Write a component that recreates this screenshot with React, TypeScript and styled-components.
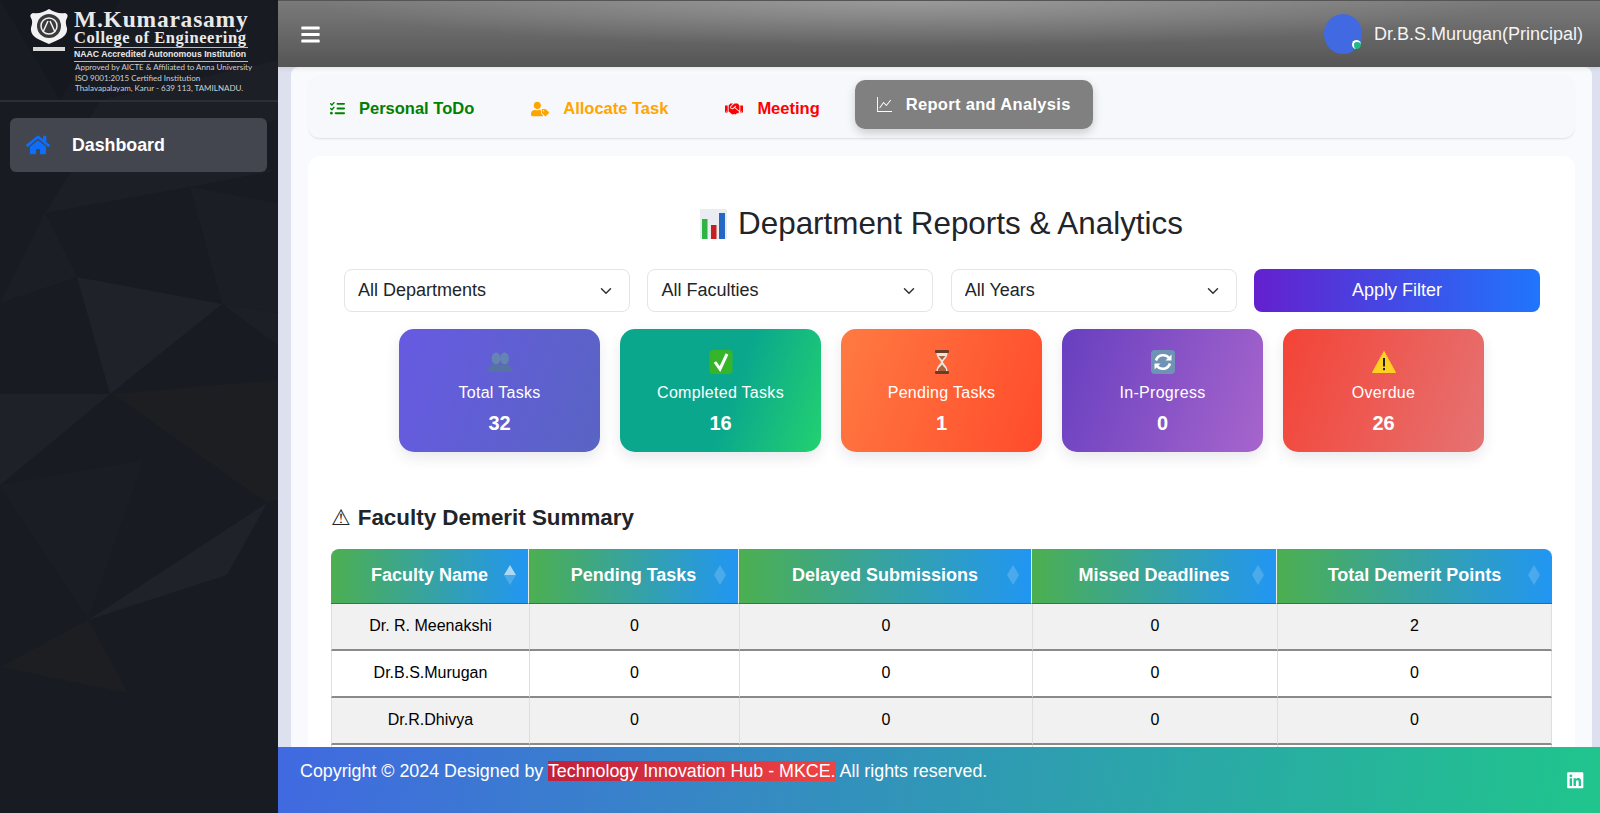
import * as React from "react";
import styled, { createGlobalStyle } from "styled-components";
import { FaBars, FaHome, FaUserTag, FaHandshake, FaLinkedin } from "react-icons/fa";
import { FaListCheck } from "react-icons/fa6";
import { BsGraphUp } from "react-icons/bs";
import { ChevronDown } from "lucide-react";

const GlobalStyle = createGlobalStyle`
  html, body {
    margin: 0;
    padding: 0;
    height: 100%;
    overflow: hidden;
    font-family: "Liberation Sans", Arial, sans-serif;
  }
  * {
    box-sizing: border-box;
  }
`;

const Shell = styled.div`
  display: flex;
  width: 100%;
  height: 813px;
  overflow: hidden;
`;

/* ---- sidebar ---- */

const Sidebar = styled.aside`
  position: relative;
  flex: none;
  width: 278px;
  background: #181b22;
  overflow: hidden;
`;

const Facets = styled.svg`
  position: absolute;
  inset: 0;
  width: 278px;
  height: 813px;
`;

const SidebarInner = styled.div`
  position: relative;
  display: flex;
  flex-direction: column;
`;

const Brand = styled.div`
  display: flex;
  gap: 6px;
  height: 102px;
  padding: 9px 0 0 30px;
  border-bottom: 2px solid #2b2e35;
`;

const Crest = styled.svg`
  flex: none;
  width: 38px;
  height: 44px;
`;

const BrandText = styled.div`
  display: flex;
  flex-direction: column;
  width: 174px;
  color: #e9e9e9;
`;

const BrandName = styled.div`
  font-family: "Liberation Serif", serif;
  font-weight: 700;
  font-size: 23.5px;
  line-height: 20px;
  white-space: nowrap;
  letter-spacing: 0.78px;
`;

const BrandCollege = styled.div`
  font-family: "Liberation Serif", serif;
  font-weight: 700;
  font-size: 16.5px;
  line-height: 17px;
  letter-spacing: 0.55px;
  white-space: nowrap;
  padding-bottom: 1px;
  border-bottom: 1px solid #bbb;
`;

const BrandNaac = styled.div`
  font-weight: 700;
  font-size: 8.7px;
  line-height: 13px;
  white-space: nowrap;
  border-bottom: 1px solid #bbb;
`;

const BrandLine = styled.div`
  font-family: Lato, sans-serif;
  font-size: 8px;
  line-height: 10.6px;
  padding-left: 1px;
  white-space: nowrap;
  color: #cfcfcf;
  &:first-of-type {
    margin-top: 1px;
  }
`;

const NavItem = styled.a`
  display: flex;
  align-items: center;
  gap: 22px;
  height: 54px;
  margin: 16px 11px 0 10px;
  padding-left: 16px;
  border-radius: 6px;
  background: #43464f;
  color: #fff;
  font-size: 17.8px;
  font-weight: 700;
  svg {
    color: #0d6efd;
    font-size: 24px;
  }
`;

/* ---- main column ---- */

const Main = styled.div`
  flex: 1;
  min-width: 0;
  display: flex;
  flex-direction: column;
`;

const Topbar = styled.header`
  position: relative;
  flex: none;
  height: 67px;
  display: flex;
  align-items: center;
  justify-content: space-between;
  padding: 0 17px 0 22px;
  color: #f4f4f4;
  background: radial-gradient(ellipse 45% 70% at 48% 0, rgba(255, 255, 255, 0.24), transparent),
    linear-gradient(#7a7a7a, #555);
  border-top: 1px solid #555;
  box-shadow: 0 2px 4px rgba(0, 0, 0, 0.08);
  svg {
    font-size: 21px;
    color: #fff;
  }
`;

const User = styled.div`
  display: flex;
  align-items: center;
  gap: 12px;
  font-size: 18px;
`;

const Avatar = styled.div`
  position: relative;
  width: 38px;
  height: 40px;
  border-radius: 50%;
  background: #4169e1;
`;

const StatusDot = styled.span`
  position: absolute;
  right: 1px;
  bottom: 5px;
  width: 9px;
  height: 9px;
  border-radius: 50%;
  background: #1fb88a;
  border-top: 2px solid #fff;
  border-left: 2px solid #fff;
`;

const ContentArea = styled.div`
  flex: 1;
  min-height: 0;
  overflow: hidden;
  background: #dde1ef;
  padding: 0 8px 0 13px;
`;

const Panel = styled.main`
  min-height: 100%;
  padding: 8px 17px 0;
  background: #f9fafd;
  border-radius: 8px 8px 0 0;
`;

const TabBar = styled.nav`
  display: flex;
  align-items: center;
  gap: 13px;
  height: 64px;
  background: #f7f8fb;
  border-radius: 12px;
  border-bottom: 1px solid #e3e5ea;
  box-shadow: 0 1px 2px rgba(0, 0, 0, 0.04);
`;

const Tab = styled.a<{ $color: string; $active?: boolean }>`
  display: flex;
  align-items: center;
  height: 49px;
  gap: 14px;
  padding: 0 22px;
  font-size: 16.5px;
  font-weight: 700;
  letter-spacing: ${(p) => (p.$active ? "0.32px" : "0")};
  white-space: nowrap;
  color: ${(p) => (p.$active ? "#fff" : p.$color)};
  background: ${(p) => (p.$active ? "#808080" : "transparent")};
  border-radius: 10px;
  box-shadow: ${(p) => (p.$active ? "0 4px 10px rgba(0, 0, 0, 0.18)" : "none")};
  transform: ${(p) => (p.$active ? "translateY(-2px)" : "translateY(2px)")};
  svg {
    flex: none;
  }
`;

const Card = styled.section`
  margin-top: 17px;
  padding: 49px 23px 0;
  background: #fff;
  border-radius: 12px 12px 0 0;
`;

const Title = styled.h2`
  display: flex;
  align-items: center;
  justify-content: center;
  gap: 11px;
  margin: 0;
  font-size: 31.4px;
  line-height: 38px;
  font-weight: 400;
  color: #212529;
`;

const Filters = styled.div`
  display: grid;
  grid-template-columns: repeat(4, 1fr);
  gap: 17.6px;
  margin: 26px 12px 0 13px;
`;

const SelectWrap = styled.div`
  position: relative;
  height: 43px;
  svg {
    position: absolute;
    top: 13px;
    right: 15px;
    color: #333;
    pointer-events: none;
  }
`;

const Select = styled.select`
  appearance: none;
  width: 100%;
  height: 100%;
  padding: 0 13px 2px;
  font: 18px "Liberation Sans", Arial, sans-serif;
  color: #212529;
  background: #fff;
  border: 1.5px solid #e2e4e8;
  border-radius: 8px;
`;

const ApplyButton = styled.button`
  height: 43px;
  border: 0;
  border-radius: 8px;
  font: 18px "Liberation Sans", Arial, sans-serif;
  color: #fff;
  background: linear-gradient(90deg, #6420ce, #2075fc);
`;

const Stats = styled.div`
  display: flex;
  justify-content: center;
  gap: 20px;
  margin-top: 17px;
`;

const StatCard = styled.div<{ $bg: string }>`
  width: 201px;
  height: 123px;
  padding-top: 21px;
  display: flex;
  flex-direction: column;
  align-items: center;
  color: #fff;
  border-radius: 15px;
  background: ${(p) => p.$bg};
  box-shadow: 0 6px 14px rgba(40, 40, 80, 0.1);
`;

const StatIcon = styled.svg`
  width: 24px;
  height: 24px;
`;

const StatLabel = styled.div`
  margin-top: 9px;
  font-size: 16px;
  line-height: 20px;
  letter-spacing: 0.3px;
`;

const StatValue = styled.div`
  margin-top: 8px;
  font-size: 20px;
  line-height: 24px;
  font-weight: 700;
`;

const SectionHeading = styled.h3`
  display: flex;
  align-items: center;
  gap: 7px;
  margin: 52px 0 0;
  font-size: 22.4px;
  line-height: 28px;
  font-weight: 700;
  color: #212529;
`;

const WarnGlyph = styled.span`
  font-family: "DejaVu Sans", sans-serif;
  font-weight: 400;
  font-size: 22px;
`;

const Table = styled.table`
  width: 100%;
  margin-top: 17px;
  table-layout: fixed;
  border-collapse: separate;
  border-spacing: 0;
`;

const HeadCell = styled.th`
  position: relative;
  height: 55px;
  padding: 0 0 2px;
  font-size: 18px;
  font-weight: 700;
  text-align: center;
  color: #fff;
  background: linear-gradient(90deg, #4caf50, #2196f3);
  border-right: 1px solid #e8eef0;
  border-bottom: 1px solid #3d6a7a;
  &:first-child {
    border-top-left-radius: 8px;
  }
  &:last-child {
    border-top-right-radius: 8px;
    border-right: 0;
  }
`;

const SortMark = styled.span<{ $on?: boolean }>`
  position: absolute;
  top: 16px;
  right: 12px;
  display: flex;
  flex-direction: column;
  gap: 0;
  &::before,
  &::after {
    content: "";
    width: 0;
    height: 0;
    border-left: 6px solid transparent;
    border-right: 6px solid transparent;
  }
  &::before {
    border-bottom: 10px solid rgba(255, 255, 255, ${(p) => (p.$on ? 0.62 : 0.18)});
  }
  &::after {
    border-top: 10px solid rgba(255, 255, 255, 0.18);
  }
`;

const Row = styled.tr<{ $alt?: boolean }>`
  background: ${(p) => (p.$alt ? "#f1f1f2" : "#fff")};
`;

const Cell = styled.td`
  height: 47px;
  padding: 0 0 2px;
  font-size: 16px;
  text-align: center;
  color: #000;
  border-left: 1px solid #dedede;
  border-bottom: 2px solid #8a8a8a;
  &:last-child {
    border-right: 1px solid #dedede;
  }
`;

const Footer = styled.footer`
  position: relative;
  flex: none;
  height: 66px;
  display: flex;
  justify-content: space-between;
  padding: 0 16px 0 22px;
  color: #fff;
  font-size: 17.85px;
  line-height: 22px;
  background: linear-gradient(100deg, #4169e1, #20c58c);
`;

const FooterText = styled.div`
  padding-top: 13px;
`;

const Credit = styled.span`
  background: linear-gradient(90deg, #c2203c, #ef4444);
`;

const FooterIcon = styled.div`
  padding-top: 24px;
  font-size: 18.5px;
`;

const columns = [198, 210, 293, 245, 275];

const headers = [
  "Faculty Name",
  "Pending Tasks",
  "Delayed Submissions",
  "Missed Deadlines",
  "Total Demerit Points",
];

const rows: [string, number, number, number, number][] = [
  ["Dr. R. Meenakshi", 0, 0, 0, 2],
  ["Dr.B.S.Murugan", 0, 0, 0, 0],
  ["Dr.R.Dhivya", 0, 0, 0, 0],
];

const stats = [
  { label: "Total Tasks", value: 32, icon: "people", bg: "linear-gradient(110deg, #675ae2, #5964c3)" },
  { label: "Completed Tasks", value: 16, icon: "check", bg: "linear-gradient(110deg, #0aa78d 55%, #23d170)" },
  { label: "Pending Tasks", value: 1, icon: "hourglass", bg: "linear-gradient(110deg, #ff7a42, #ff4b2b)" },
  { label: "In-Progress", value: 0, icon: "cycle", bg: "linear-gradient(110deg, #673fc0, #a765cc)" },
  { label: "Overdue", value: 26, icon: "warning", bg: "linear-gradient(110deg, #f44336, #e57373)" },
];

function StatGlyph({ name }: { name: string }) {
  if (name === "people") {
    return (
      <StatIcon viewBox="0 0 24 24">
        <g fill="#6485b0">
          <ellipse cx="8" cy="8.5" rx="4.4" ry="6" />
          <ellipse cx="16.5" cy="8.5" rx="4.4" ry="6" />
        </g>
        <path d="M0 22c0-5 3-8 8-8s8 3 8 8z" fill="#5573a3" />
        <path d="M9 22c0-5 3-8 7.5-8s7.500 3 7.500 8z" fill="#5573a3" />
      </StatIcon>
    );
  }
  if (name === "check") {
    return (
      <StatIcon viewBox="0 0 24 24">
        <rect x="0.5" y="0" width="23" height="24" rx="3.5" fill="#37b52a" />
        <path d="M6 12l5 7 7-15" fill="none" stroke="#fff" strokeWidth="3" />
      </StatIcon>
    );
  }
  if (name === "hourglass") {
    return (
      <StatIcon viewBox="0 0 24 24">
        <rect x="5" y="0" width="14" height="3" rx="1" fill="#6b3b2a" />
        <rect x="5" y="21" width="14" height="3" rx="1" fill="#6b3b2a" />
        <path d="M6.500 3h11c0 5-4 7-4.500 9 .5 2 4.500 4 4.500 9h-11c0-5 4-7 4.500-9-.5-2-4.500-4-4.500-9z" fill="#e9e4dc" />
        <path d="M8 19c1.500-2 2.800-2.500 4-4.500 1.200 2 2.500 2.500 4 4.500v2H8z" fill="#a8643c" />
        <path d="M8.500 6h7l-3.500 4z" fill="#a8643c" />
      </StatIcon>
    );
  }
  if (name === "cycle") {
    return (
      <StatIcon viewBox="0 0 24 24">
        <rect width="24" height="24" rx="4" fill="#6f93b5" />
        <path d="M5 10.500a7.500 7.500 0 0 1 13-2.500" fill="none" stroke="#fff" strokeWidth="2.6" />
        <path d="M20.500 4.500v6h-6z" fill="#fff" />
        <path d="M19 13.500a7.500 7.500 0 0 1-13 2.500" fill="none" stroke="#fff" strokeWidth="2.6" />
        <path d="M3.500 19.500v-6h6z" fill="#fff" />
      </StatIcon>
    );
  }
  return (
    <StatIcon viewBox="0 0 24 24">
      <path d="M12 1.500L23.500 22.500H.5z" fill="#fdd021" stroke="#fdd021" strokeLinejoin="round" />
      <rect x="11" y="8" width="2" height="8.5" fill="#222" />
      <rect x="11" y="18" width="2" height="2.2" fill="#222" />
    </StatIcon>
  );
}

export default function App() {
  return (
    <Shell>
      <GlobalStyle />
      <Sidebar>
        <Facets viewBox="0 0 278 813">
          <polygon points="0,0 120,0 60,100" fill="#15181f" />
          <polygon points="100,100 278,60 278,120 60,170" fill="#1c1f26" />
          <polygon points="45,213 77,277 0,303" fill="#1b1e25" />
          <polygon points="72,170 278,170 190,187 45,213" fill="#1c1f26" />
          <polygon points="190,187 278,203 278,313 222,304" fill="#1b1e25" />
          <polygon points="77,277 222,304 110,394" fill="#1f2229" />
          <polygon points="222,304 278,313 278,345" fill="#1d1f26" />
          <polygon points="0,394 110,394 0,485" fill="#1e2128" />
          <polygon points="113,394 278,380 278,500 267,503" fill="#1d1e22" />
          <polygon points="0,485 143,460 88,620" fill="#1b1d24" />
          <polygon points="267,503 227,575 88,620" fill="#1f2229" />
          <polygon points="88,620 0,667 128,693" fill="#1d1e22" />
        </Facets>
        <SidebarInner>
          <Brand>
            <Crest viewBox="0 0 38 44">
              <path d="M3 4c6 1 11-1 16-4 5 3 10 5 16 4 3 1 3 3 2 5-2 3-1 7 0 10 1 9-9 12-18 16C10 31 0 28 1 19c1-3 2-7 0-10-1-2-1-4 2-5z" fill="#f2f2f2" />
              <circle cx="19" cy="17" r="12" fill="#3a3a3c" />
              <circle cx="19" cy="17" r="8" fill="none" stroke="#f2f2f2" strokeWidth="1.5" />
              <path d="M13 23l5-11M25 23l-5-11" stroke="#f2f2f2" strokeWidth="1.5" />
              <rect x="3" y="38" width="32" height="4" fill="#d8d8d8" />
            </Crest>
            <BrandText>
              <BrandName>M.Kumarasamy</BrandName>
              <BrandCollege>College of Engineering</BrandCollege>
              <BrandNaac>NAAC Accredited Autonomous Institution</BrandNaac>
              <BrandLine>Approved by AICTE &amp; Affiliated to Anna University</BrandLine>
              <BrandLine>ISO 9001:2015 Certified Institution</BrandLine>
              <BrandLine>Thalavapalayam, Karur - 639 113, TAMILNADU.</BrandLine>
            </BrandText>
          </Brand>
          <NavItem>
            <FaHome />
            Dashboard
          </NavItem>
        </SidebarInner>
      </Sidebar>
      <Main>
        <Topbar>
          <FaBars />
          <User>
            <Avatar>
              <StatusDot />
            </Avatar>
            Dr.B.S.Murugan(Principal)
          </User>
        </Topbar>
        <ContentArea>
          <Panel>
            <TabBar>
              <Tab $color="#008000">
                <FaListCheck size={15} />
                Personal ToDo
              </Tab>
              <Tab $color="#ffa500">
                <FaUserTag size={18} />
                Allocate Task
              </Tab>
              <Tab $color="#ff0000">
                <FaHandshake size={18} />
                Meeting
              </Tab>
              <Tab $color="#fff" $active>
                <BsGraphUp size={15} />
                Report and Analysis
              </Tab>
            </TabBar>
            <Card>
              <Title>
                <svg width="27" height="30" viewBox="0 0 27 30">
                  <rect width="27" height="30" rx="1" fill="#e9edf2" />
                  <rect x="2" y="10" width="5.500" height="20" fill="#2fb344" />
                  <rect x="11" y="16" width="5.500" height="14" fill="#c81e1e" />
                  <rect x="19" y="4" width="6" height="26" fill="#2468c4" />
                </svg>
                Department Reports &amp; Analytics
              </Title>
              <Filters>
                <SelectWrap>
                  <Select>
                    <option>All Departments</option>
                  </Select>
                  <ChevronDown size={18} />
                </SelectWrap>
                <SelectWrap>
                  <Select>
                    <option>All Faculties</option>
                  </Select>
                  <ChevronDown size={18} />
                </SelectWrap>
                <SelectWrap>
                  <Select>
                    <option>All Years</option>
                  </Select>
                  <ChevronDown size={18} />
                </SelectWrap>
                <ApplyButton>Apply Filter</ApplyButton>
              </Filters>
              <Stats>
                {stats.map((s) => (
                  <StatCard key={s.label} $bg={s.bg}>
                    <StatGlyph name={s.icon} />
                    <StatLabel>{s.label}</StatLabel>
                    <StatValue>{s.value}</StatValue>
                  </StatCard>
                ))}
              </Stats>
              <SectionHeading>
                <WarnGlyph>⚠</WarnGlyph>
                Faculty Demerit Summary
              </SectionHeading>
              <Table>
                <colgroup>
                  {columns.map((w, i) => (
                    <col key={i} style={{ width: w }} />
                  ))}
                </colgroup>
                <thead>
                  <tr>
                    {headers.map((h, i) => (
                      <HeadCell key={h}>
                        {h}
                        <SortMark $on={i === 0} />
                      </HeadCell>
                    ))}
                  </tr>
                </thead>
                <tbody>
                  {rows.map((r, i) => (
                    <Row key={r[0]} $alt={i % 2 === 0}>
                      {r.map((v, j) => (
                        <Cell key={j}>{v}</Cell>
                      ))}
                    </Row>
                  ))}
                  <Row>
                    {columns.map((w) => (
                      <Cell key={w} />
                    ))}
                  </Row>
                </tbody>
              </Table>
            </Card>
          </Panel>
        </ContentArea>
        <Footer>
          <FooterText>
            Copyright © 2024 Designed by <Credit>Technology Innovation Hub - MKCE.</Credit> All rights reserved.
          </FooterText>
          <FooterIcon>
            <FaLinkedin />
          </FooterIcon>
        </Footer>
      </Main>
    </Shell>
  );
}
